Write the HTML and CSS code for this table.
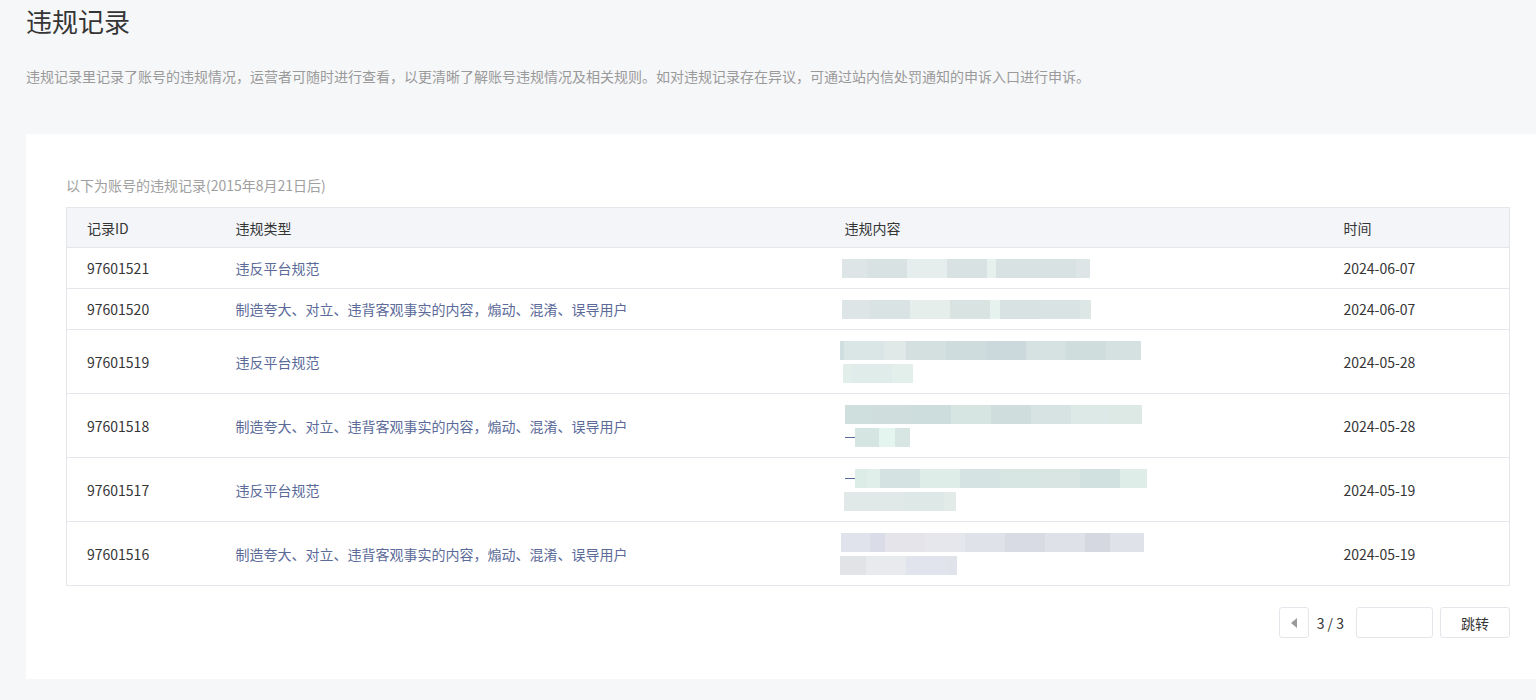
FILE: index.html
```html
<!DOCTYPE html>
<html lang="zh-CN">
<head>
<meta charset="utf-8">
<title>违规记录</title>
<link rel="stylesheet" href="styles.css">
</head>
<body>
<div class="page">
  <h1 class="title">违规记录</h1>
  <p class="desc">违规记录里记录了账号的违规情况，运营者可随时进行查看，以更清晰了解账号违规情况及相关规则。如对违规记录存在异议，可通过站内信处罚通知的申诉入口进行申诉。</p>
  <div class="card">
    <div class="caption">以下为账号的违规记录(2015年8月21日后)</div>
    <table class="tbl">
      <colgroup><col class="c1"><col class="c2"><col class="c3"><col class="c4"></colgroup>
      <thead>
        <tr><th>记录ID</th><th>违规类型</th><th>违规内容</th><th>时间</th></tr>
      </thead>
      <tbody>
        <tr class="single">
          <td>97601521</td><td class="type">违反平台规范</td>
          <td class="blur"><div class="line" style="margin-left:-3px"><i style="width:25px;background:#dde5e6"></i><i style="width:40px;background:#d9e2e3"></i><i style="width:40px;background:#e5eeec"></i><i style="width:40px;background:#d9e2e3"></i><i style="width:9px;background:#e6f0ed"></i><i style="width:80px;background:#d9e2e3"></i><i style="width:14px;background:#dde5e6"></i></div></td>
          <td>2024-06-07</td>
        </tr>
        <tr class="single">
          <td>97601520</td><td class="type">制造夸大、对立、违背客观事实的内容，煽动、混淆、误导用户</td>
          <td class="blur"><div class="line" style="margin-left:-3px"><i style="width:28px;background:#dde5e6"></i><i style="width:40px;background:#d9e3e3"></i><i style="width:40px;background:#e5eeeb"></i><i style="width:40px;background:#d8e3e2"></i><i style="width:10px;background:#e6f2ed"></i><i style="width:40px;background:#d8e2e2"></i><i style="width:40px;background:#d9e3e3"></i><i style="width:11px;background:#dde7e6"></i></div></td>
          <td>2024-06-07</td>
        </tr>
        <tr class="double">
          <td>97601519</td><td class="type">违反平台规范</td>
          <td class="blur">
            <div class="line" style="margin-left:-5px"><i style="width:4px;background:#cfdfdf"></i><i style="width:40px;background:#dae6e5"></i><i style="width:22px;background:#e0e9e7"></i><i style="width:40px;background:#d4e0e0"></i><i style="width:40px;background:#cfdcdd"></i><i style="width:40px;background:#cbd9dd"></i><i style="width:40px;background:#d6e1e1"></i><i style="width:40px;background:#cfdddd"></i><i style="width:35px;background:#d4e1e0"></i></div>
            <div class="line" style="margin-left:-2px"><i style="width:9px;background:#e2eeea"></i><i style="width:40px;background:#dfecea"></i><i style="width:21px;background:#e2efeb"></i></div>
          </td>
          <td>2024-05-28</td>
        </tr>
        <tr class="double">
          <td>97601518</td><td class="type">制造夸大、对立、违背客观事实的内容，煽动、混淆、误导用户</td>
          <td class="blur">
            <div class="line"><i style="width:26px;background:#cedfdd"></i><i style="width:40px;background:#cfdedd"></i><i style="width:40px;background:#cddcdc"></i><i style="width:40px;background:#d6e4e2"></i><i style="width:40px;background:#cfdedd"></i><i style="width:40px;background:#d6e3e2"></i><i style="width:37px;background:#dde9e6"></i><i style="width:34px;background:#dce9e5"></i></div>
            <div class="line"><span class="dash"></span><i style="width:24px;background:#d5e5e2"></i><i style="width:16px;background:#e4f5ef"></i><i style="width:15px;background:#d8e6e3"></i></div>
          </td>
          <td>2024-05-28</td>
        </tr>
        <tr class="double">
          <td>97601517</td><td class="type">违反平台规范</td>
          <td class="blur">
            <div class="line"><span class="dash"></span><i style="width:12px;background:#dcede8"></i><i style="width:13px;background:#e0efea"></i><i style="width:40px;background:#d4e3e2"></i><i style="width:40px;background:#dfede9"></i><i style="width:40px;background:#d5e4e2"></i><i style="width:40px;background:#d8e6e3"></i><i style="width:40px;background:#d8e5e2"></i><i style="width:40px;background:#d1e1e0"></i><i style="width:27px;background:#dfede8"></i></div>
            <div class="line" style="margin-left:-1px"><i style="width:60px;background:#e0e9e7"></i><i style="width:40px;background:#dee8e6"></i><i style="width:12px;background:#e3ebe9"></i></div>
          </td>
          <td>2024-05-19</td>
        </tr>
        <tr class="double">
          <td>97601516</td><td class="type">制造夸大、对立、违背客观事实的内容，煽动、混淆、误导用户</td>
          <td class="blur">
            <div class="line" style="margin-left:-4px"><i style="width:29px;background:#e1e3ec"></i><i style="width:15px;background:#dadde8"></i><i style="width:40px;background:#e4e4ea"></i><i style="width:40px;background:#e6e7ec"></i><i style="width:40px;background:#e0e2ea"></i><i style="width:40px;background:#d8dbe4"></i><i style="width:40px;background:#dfe1e9"></i><i style="width:25px;background:#d5d8e1"></i><i style="width:34px;background:#e0e2ea"></i></div>
            <div class="line" style="margin-left:-5px"><i style="width:26px;background:#e1e3e7"></i><i style="width:40px;background:#e9eaee"></i><i style="width:40px;background:#e1e4ec"></i><i style="width:11px;background:#e1e3ea"></i></div>
          </td>
          <td>2024-05-19</td>
        </tr>
      </tbody>
    </table>
    <div class="pager">
      <button class="prev" type="button" aria-label="上一页"><svg width="8" height="12" viewBox="0 0 8 12"><path d="M7 1 L1 6 L7 11 Z" fill="#9a9a9a"/></svg></button>
      <span class="pnum">3 / 3</span>
      <input class="pinput" type="text">
      <button class="go" type="button">跳转</button>
    </div>
  </div>
</div>
</body>
</html>
```

FILE: styles.css
```css
* { box-sizing: border-box; }
html, body { margin: 0; padding: 0; background: #f6f7f9; }
body {
  font-family: "Microsoft YaHei", "Noto Sans CJK SC", sans-serif;
  color: #353535;
  font-size: 14px;
}
.page { padding: 2px 0 21px 26px; }
.title {
  margin: 0;
  font-size: 26px;
  font-weight: 400;
  line-height: 38px;
  color: #353535;
}
.desc {
  margin: 26px 0 0;
  font-size: 14px;
  line-height: 20px;
  color: #9a9a9a;
}
.card {
  margin-top: 48px;
  background: #fff;
  padding: 40px 26px 41px 40px;
}
.caption {
  font-size: 14px;
  line-height: 22px;
  color: #a0a0a0;
  margin-bottom: 11px;
}
.tbl {
  width: 100%;
  border-collapse: collapse;
  border: 1px solid #e4e6eb;
  table-layout: fixed;
}
.c1 { width: 149px; }
.c2 { width: 609px; }
.c3 { width: 499px; }
.c4 { width: auto; }
.tbl th {
  background: #f4f5f9;
  height: 40px;
  text-align: left;
  font-weight: 400;
  color: #353535;
  padding: 0 0 0 20px;
  border-bottom: 1px solid #e4e6eb;
}
.tbl td {
  padding: 0 0 0 20px;
  border-bottom: 1px solid #e4e6eb;
  vertical-align: middle;
  color: #353535;
}
.tbl tr.single td { height: 41px; }
.tbl tr.double td { height: 64px; }
.tbl td.type { color: #5b6a98; }
.line {
  display: flex;
  align-items: center;
  height: 19px;
}
.line + .line { margin-top: 4px; }
.line i { display: block; height: 19px; flex: none; }
.dash {
  display: block;
  width: 10px;
  height: 1px;
  background: #5b6a98;
  flex: none;
}
.pager {
  margin-top: 21px;
  display: flex;
  justify-content: flex-end;
  align-items: center;
}
.prev {
  width: 30px;
  height: 31px;
  border: 1px solid #e4e6eb;
  border-radius: 3px;
  background: #fff;
  display: flex;
  align-items: center;
  justify-content: center;
  padding: 0;
}
.pnum {
  margin: 0 12px 0 8px;
  color: #353535;
  font-size: 14px;
}
.pinput {
  width: 77px;
  height: 31px;
  border: 1px solid #e4e6eb;
  border-radius: 3px;
  background: #fff;
  margin-right: 7px;
}
.go {
  width: 70px;
  height: 31px;
  border: 1px solid #e4e6eb;
  border-radius: 3px;
  background: #fff;
  font-family: inherit;
  font-size: 14px;
  color: #353535;
  padding: 0;
}
```
